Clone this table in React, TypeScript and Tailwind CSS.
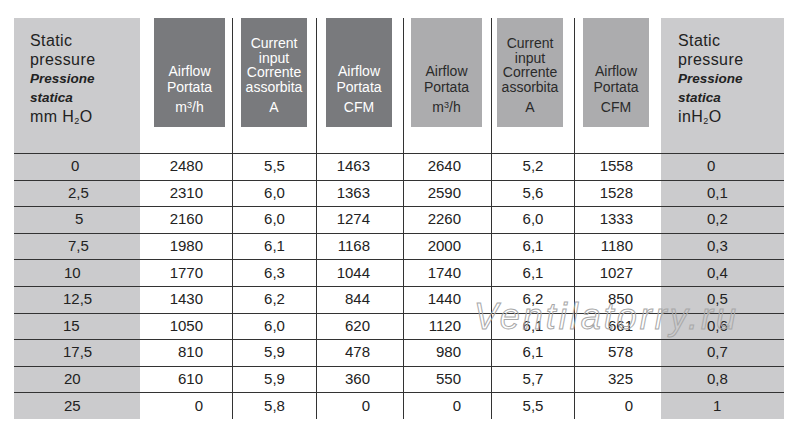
const colW = [
  "w-[126px]",
  "w-[92px]",
  "w-[84px]",
  "w-[87px]",
  "w-[88px]",
  "w-[83px]",
  "w-[87px]",
  "w-[123px]",
];

const rows: { pl: string; vals: string[]; last: string; lastPl: string }[] = [
  { pl: "pl-[57px]", vals: ["2480", "5,5", "1463", "2640", "5,2", "1558"], last: "0", lastPl: "pl-[46px]" },
  { pl: "pl-[54px]", vals: ["2310", "6,0", "1363", "2590", "5,6", "1528"], last: "0,1", lastPl: "pl-[46px]" },
  { pl: "pl-[61px]", vals: ["2160", "6,0", "1274", "2260", "6,0", "1333"], last: "0,2", lastPl: "pl-[46px]" },
  { pl: "pl-[54px]", vals: ["1980", "6,1", "1168", "2000", "6,1", "1180"], last: "0,3", lastPl: "pl-[46px]" },
  { pl: "pl-[50px]", vals: ["1770", "6,3", "1044", "1740", "6,1", "1027"], last: "0,4", lastPl: "pl-[46px]" },
  { pl: "pl-[49px]", vals: ["1430", "6,2", "844", "1440", "6,2", "850"], last: "0,5", lastPl: "pl-[46px]" },
  { pl: "pl-[49px]", vals: ["1050", "6,0", "620", "1120", "6,1", "661"], last: "0,6", lastPl: "pl-[46px]" },
  { pl: "pl-[49px]", vals: ["810", "5,9", "478", "980", "6,1", "578"], last: "0,7", lastPl: "pl-[46px]" },
  { pl: "pl-[50px]", vals: ["610", "5,9", "360", "550", "5,7", "325"], last: "0,8", lastPl: "pl-[46px]" },
  { pl: "pl-[50px]", vals: ["0", "5,8", "0", "0", "5,5", "0"], last: "1", lastPl: "pl-[52px]" },
];

const pressure = ["0", "2,5", "5", "7,5", "10", "12,5", "15", "17,5", "20", "25"];

// alignment of the six data columns between the two pressure columns
const valCls = [
  "justify-end pr-[29px]",
  "justify-center border-l border-[#333]",
  "justify-end pr-[33px] border-l border-[#333]",
  "justify-end pr-[30px] border-l border-[#333]",
  "justify-center border-l border-[#333]",
  "justify-end pr-[28px] border-l border-[#333]",
];

const PressureHead = ({ unit, pl }: { unit: React.ReactNode; pl: string }) => (
  <div className={`h-full bg-[#cbcbcd] pt-[13px] ${pl} text-[16px] leading-[19px] tracking-[0.4px] text-[#222]`}>
    <div>Static</div>
    <div>pressure</div>
    <div className="text-[13.5px] font-bold italic tracking-normal">Pressione</div>
    <div className="text-[13.5px] font-bold italic tracking-normal">statica</div>
    <div>{unit}</div>
  </div>
);

const HeadBox = ({
  lines,
  unit,
  box,
  dark,
  tight,
}: {
  lines: string[];
  unit: React.ReactNode;
  box: string;
  dark?: boolean;
  tight?: boolean;
}) => (
  <div
    className={`${box} h-[109px] flex flex-col items-center justify-end pb-[12px] text-center text-[14px] ${
      dark ? "bg-[#797a7d] text-white" : "bg-[#acacae] text-[#2a2a2a]"
    }`}
  >
    <div className={tight ? "leading-[14.5px]" : "leading-[16px]"}>
      {lines.map((l) => (
        <div key={l}>{l}</div>
      ))}
    </div>
    <div className={`leading-[16px] ${tight ? "mt-[5px]" : "mt-[4px]"}`}>{unit}</div>
  </div>
);

const m3h = (
  <>
    m<sup className="text-[9px]">3</sup>/h
  </>
);

export default function App() {
  return (
    <div className="relative w-[800px] h-[439px] bg-white text-[#222] font-['Liberation_Sans',Arial,sans-serif]">
      <div className="pt-[18px] pl-[14px] w-[784px]">
        {/* header */}
        <div className="flex w-[770px] h-[135px]">
          <div className={colW[0]}>
            <PressureHead
              pl="pl-[16px]"
              unit={
                <>
                  mm H<sub className="text-[9px]">2</sub>O
                </>
              }
            />
          </div>
          <div className={`${colW[1]} pl-[14px]`}>
            <HeadBox dark box="w-[71px]" lines={["Airflow", "Portata"]} unit={m3h} />
          </div>
          <div className={`${colW[2]} pl-[8px] border-l border-[#333]`}>
            <HeadBox dark tight box="w-[66px]" lines={["Current", "input", "Corrente", "assorbita"]} unit="A" />
          </div>
          <div className={`${colW[3]} pl-[9px] border-l border-[#333]`}>
            <HeadBox dark box="w-[66px]" lines={["Airflow", "Portata"]} unit="CFM" />
          </div>
          <div className={`${colW[4]} pl-[7px] border-l border-[#333]`}>
            <HeadBox box="w-[71px]" lines={["Airflow", "Portata"]} unit={m3h} />
          </div>
          <div className={`${colW[5]} pl-[5px] border-l border-[#333]`}>
            <HeadBox tight box="w-[66px]" lines={["Current", "input", "Corrente", "assorbita"]} unit="A" />
          </div>
          <div className={`${colW[6]} pl-[8px] border-l border-[#333]`}>
            <HeadBox box="w-[66px]" lines={["Airflow", "Portata"]} unit="CFM" />
          </div>
          <div className={colW[7]}>
            <PressureHead
              pl="pl-[17px]"
              unit={
                <>
                  inH<sub className="text-[9px]">2</sub>O
                </>
              }
            />
          </div>
        </div>

        {/* data */}
        {rows.map((r, i) => (
          <div key={i} className="flex w-[770px] h-[26.6px] border-t border-[#333] text-[15px] leading-none">
            <div className={`${colW[0]} ${r.pl} flex items-center bg-[#cbcbcd] pb-[2px]`}>{pressure[i]}</div>
            {r.vals.map((v, j) => (
              <div key={j} className={`${colW[j + 1]} ${valCls[j]} flex items-center pb-[2px]`}>
                {v}
              </div>
            ))}
            <div className={`${colW[7]} ${r.lastPl} flex items-center bg-[#cbcbcd] pb-[2px]`}>{r.last}</div>
          </div>
        ))}
      </div>

      {/* watermark */}
      <div className="absolute left-[474px] top-[299px] text-[36px] leading-none italic tracking-[3px] text-transparent [-webkit-text-stroke:1px_#a8a8a8]">
        Ventilatorry.ru
      </div>
    </div>
  );
}
